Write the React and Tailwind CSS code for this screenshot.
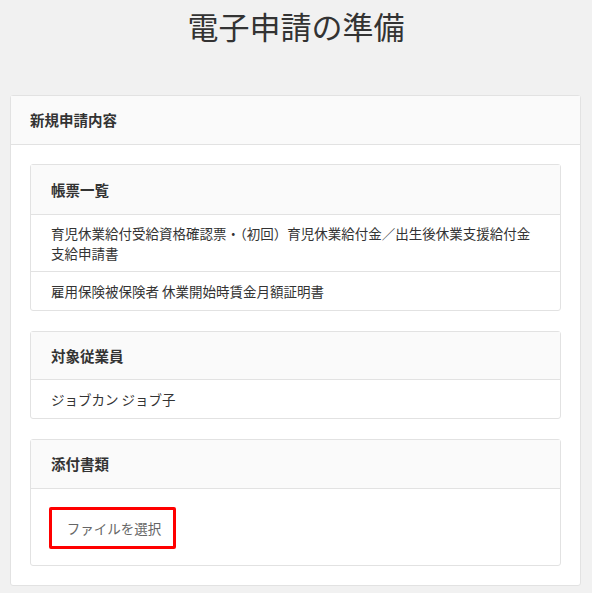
const font = {
  fontFamily: '"Noto Sans CJK JP", "Noto Sans", sans-serif',
};

const forms = [
  "育児休業給付受給資格確認票・（初回）育児休業給付金／出生後休業支援給付金支給申請書",
  "雇用保険被保険者 休業開始時賃金月額証明書",
];

function SubCard({ title, head = "h-[49px]", children }) {
  return (
    <div className="rounded-[3px] border border-[#e2e2e2] bg-white">
      <div
        className={`flex ${head} items-center border-b border-[#e2e2e2] bg-[#fafafa] px-[20px] text-[14.5px] font-bold text-[#333]`}
      >
        {title}
      </div>
      {children}
    </div>
  );
}

function Row({ children, last, tight }) {
  return (
    <div
      className={`px-[20px] text-[13.5px] leading-[20px] text-[#333] ${
        tight ? "py-[8px]" : "py-[9px]"
      } ${last ? "" : "border-b border-[#e2e2e2]"}`}
    >
      {children}
    </div>
  );
}

export default function App() {
  return (
    <div className="min-h-screen bg-[#f1f1f1] pb-[8px]" style={font}>
      <h1 className="pt-[9px] text-center text-[31px] font-normal leading-[34px] text-[#333]">
        電子申請の準備
      </h1>

      <div className="mx-[10px] mt-[52px] w-[571px] rounded-[3px] border border-[#e2e2e2] bg-white">
        <div className="flex h-[49px] items-center border-b border-[#e2e2e2] bg-[#fafafa] px-[19px] text-[14.5px] font-bold text-[#333]">
          新規申請内容
        </div>

        <div className="flex flex-col gap-[20px] p-[19px]">
          <SubCard title="帳票一覧" head="h-[50px]">
            {forms.map((f, i) => (
              <Row key={f} last={i === forms.length - 1} tight={i === 0}>
                {f}
              </Row>
            ))}
          </SubCard>

          <SubCard title="対象従業員" head="h-[48px]">
            <Row last>ジョブカン ジョブ子</Row>
          </SubCard>

          <SubCard title="添付書類" head="h-[49px]">
            <div className="px-[18px] pb-[16px] pt-[18px]">
              <div className="flex h-[42px] w-[127px] items-center justify-center rounded-[2px] border-[3px] border-[#ff0000] bg-white pl-[3px] text-[13.5px] text-[#666]">
                ファイルを選択
              </div>
            </div>
          </SubCard>
        </div>
      </div>
    </div>
  );
}
